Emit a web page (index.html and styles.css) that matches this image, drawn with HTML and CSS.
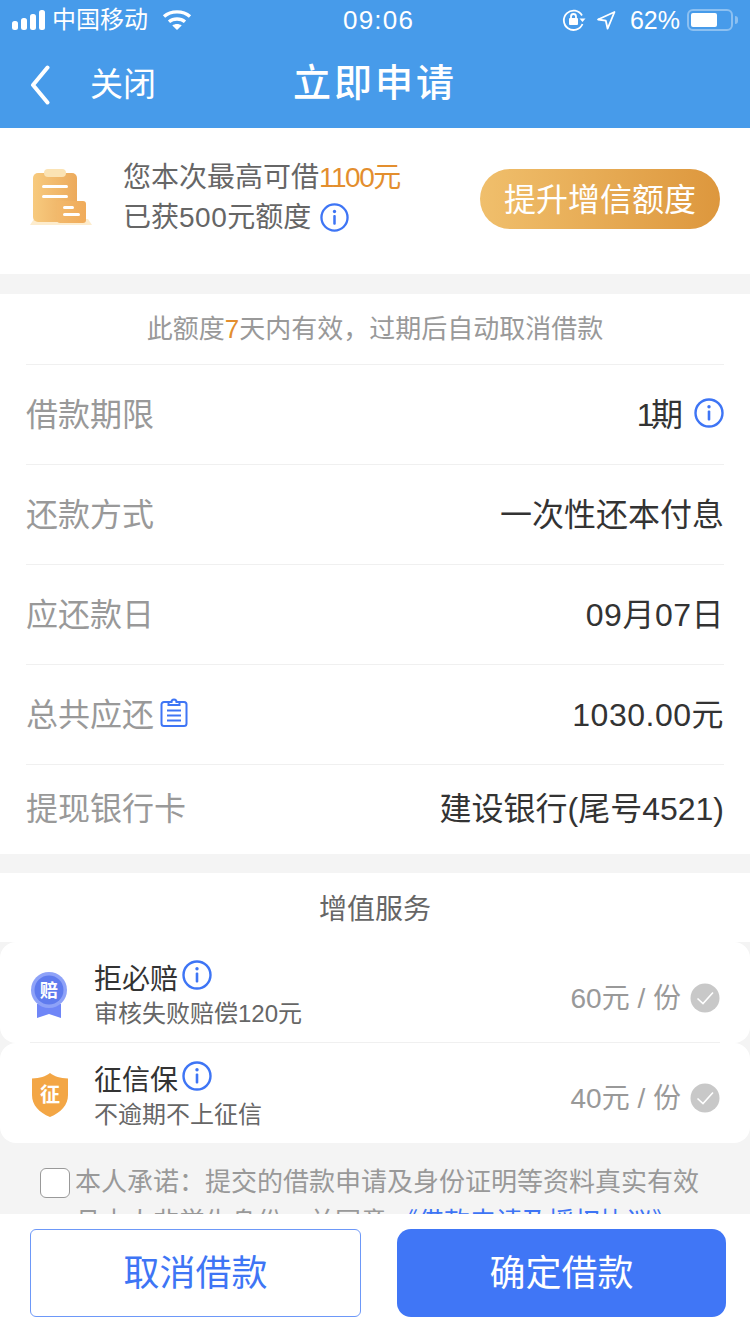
FILE: index.html

```html
<!DOCTYPE html>
<html lang="zh-CN">
<head>
    <meta charset="UTF-8">
    <meta name="viewport" content="width=device-width, initial-scale=1.0">
    <title>立即申请</title>
    <link rel="stylesheet" href="styles.css">
</head>
<body>
<div class="page">
    <header class="header">
        <div class="status-bar">
            <div class="status-left">
                <svg class="signal" width="35" height="20" viewBox="0 0 35 20"><rect x="0" y="11" width="6" height="9" rx="2.500"/><rect x="9" y="8" width="6" height="12" rx="2.500"/><rect x="18" y="4" width="6" height="16" rx="2.500"/><rect x="27" y="0" width="6" height="20" rx="2.500"/></svg>
                <span class="carrier">中国移动</span>
                <svg class="wifi" width="30" height="22" viewBox="0 0 30 22" fill="none" stroke="#fff" stroke-width="3.400"><path d="M2 7.500c7-6.200 19-6.200 26 0"/><path d="M7 12.800c4.500-3.800 11.500-3.800 16 0"/><path d="M15 21l-4.700-4.600c2.600-2 6.800-2 9.400 0z" fill="#fff" stroke="none"/></svg>
            </div>
            <span class="time">09:06</span>
            <div class="status-right">
                <svg width="24" height="24" viewBox="0 0 24 24" fill="none" stroke="#fff" stroke-width="1.800"><path d="M20 7.500A9.700 9.700 0 1 0 20.500 16"/><path d="M17.500 10.500h6l-3 3.500z" fill="#fff" stroke="none"/><rect x="7" y="10" width="9" height="7" rx="1" fill="#fff" stroke="none"/><path d="M9 10V8.500a2.500 2.500 0 0 1 5 0V10"/></svg>
                <svg class="arrow" width="20" height="20" viewBox="0 0 20 20" fill="none" stroke="#fff" stroke-width="1.800" stroke-linejoin="round"><path d="M18.500 2 2 9.500l7.800 1.200 1.800 8z"/></svg>
                <span class="percent">62%</span>
                <div class="battery"><div class="battery-fill"></div></div>
                <div class="battery-tip"></div>
            </div>
        </div>
        <div class="nav-bar">
            <div class="nav-left">
                <svg width="20" height="40" viewBox="0 0 20 40" fill="none" stroke="#fff" stroke-width="4" stroke-linecap="round" stroke-linejoin="round"><path d="M17.500 2.500 3 20l14.500 17.500"/></svg>
                <span class="nav-close">关闭</span>
            </div>
            <h1 class="nav-title">立即申请</h1>
        </div>
    </header>

    <main class="content">
        <section class="banner">
            <svg class="banner-icon" width="62" height="58" viewBox="0 0 62 58">
                <defs>
                    <linearGradient id="clip" x1="0" x2="1"><stop offset="0" stop-color="#f7ca7e"/><stop offset="1" stop-color="#ecaa5c"/></linearGradient>
                    <linearGradient id="card" x1="0" x2="1"><stop offset="0" stop-color="#f2b96c"/><stop offset="1" stop-color="#f0ab5a"/></linearGradient>
                </defs>
                <path d="M4 50h54l4 6H0z" fill="#fdeccd"/>
                <rect x="3" y="4" width="44" height="49" rx="5" fill="url(#clip)"/>
                <rect x="14" y="0" width="22" height="8" rx="4" fill="#fbe3b4"/>
                <rect x="12" y="16" width="26" height="3" rx="1.500" fill="#fff"/>
                <rect x="12" y="26" width="26" height="3" rx="1.500" fill="#fff"/>
                <rect x="27" y="32" width="29" height="22" rx="3" fill="url(#card)"/>
                <rect x="33" y="37" width="11" height="3" rx="1.500" fill="#fff"/>
                <rect x="33" y="44" width="17" height="3" rx="1.500" fill="#fff"/>
            </svg>
            <div class="banner-text">
                <p>您本次最高可借<span class="orange"><span class="narrow">1100</span>元</span></p>
                <p class="banner-line"><span>已获<span class="wide">500</span>元额度</span>
                    <svg class="info" width="29" height="29" viewBox="0 0 30 30"><use href="#info-icon"/></svg>
                </p>
            </div>
            <div class="raise-btn">提升增信额度</div>
        </section>

        <section class="loan">
            <div class="notice">此额度<span class="orange">7</span>天内有效，过期后自动取消借款</div>
            <div class="row">
                <span class="row-label">借款期限</span>
                <span class="row-value"><span><span class="one">1</span>期</span>
                    <svg class="info" width="30" height="30" viewBox="0 0 30 30"><use href="#info-icon"/></svg>
                </span>
            </div>
            <div class="row">
                <span class="row-label">还款方式</span>
                <span class="row-value">一次性还本付息</span>
            </div>
            <div class="row">
                <span class="row-label">应还款日</span>
                <span class="row-value wide">09月07日</span>
            </div>
            <div class="row">
                <span class="row-label">总共应还
                    <svg width="28" height="30" viewBox="0 0 28 30" fill="none" stroke="#3e75f5" stroke-width="2"><path d="M8.500 5H4a2.500 2.500 0 0 0-2.500 2.500v19A2.500 2.500 0 0 0 4 29h20a2.500 2.500 0 0 0 2.500-2.500v-19A2.500 2.500 0 0 0 24 5h-4.500"/><path d="M8.500 8V5h3a2.500 2.500 0 0 1 5 0h3v3z"/><path d="M7 13.500h14M7 18.500h14M7 23.500h14"/></svg>
                </span>
                <span class="row-value wide">1030.00元</span>
            </div>
            <div class="row row-last">
                <span class="row-label">提现银行卡</span>
                <span class="row-value">建设银行(尾号4521)</span>
            </div>
        </section>

        <section class="services">
            <div class="services-title">增值服务</div>
            <div class="service-card">
                <svg class="service-icon icon-medal" width="38" height="46" viewBox="0 0 38 46">
                    <path d="M7 32h24v14l-12-4-12 4z" fill="#6f86f7"/>
                    <circle cx="19" cy="18" r="18" fill="#8ea2f8"/>
                    <circle cx="19" cy="18" r="14.500" fill="#5f7bee"/>
                    <text x="19" y="24.500" class="badge-text badge-small" text-anchor="middle">赔</text>
                </svg>
                <div class="service-info">
                    <div class="service-name">拒必赔
                        <svg class="info service-tip" width="30" height="30" viewBox="0 0 30 30"><use href="#info-icon"/></svg>
                    </div>
                    <div class="service-desc">审核失败赔偿120元</div>
                </div>
                <div class="service-price">60元 / 份</div>
                <svg class="check" width="30" height="30" viewBox="0 0 30 30"><circle cx="15" cy="15" r="14.500" fill="#c8c8c8"/><path d="M7.500 15.500l5.500 5L23 9.500" fill="none" stroke="#fff" stroke-width="1.600"/></svg>
            </div>
            <div class="service-card service-card-next">
                <svg class="service-icon icon-shield" width="38" height="44" viewBox="0 0 38 44">
                    <path d="M20 0c4.500 3.500 10 5 18 5.500V22C38 32 31 39.500 20 44 9 39.500 2 32 2 22V5.500C10 5 15.500 3.500 20 0z" fill="#f3a645"/>
                    <text x="20" y="29" class="badge-text" text-anchor="middle">征</text>
                </svg>
                <div class="service-info">
                    <div class="service-name">征信保
                        <svg class="info service-tip" width="30" height="30" viewBox="0 0 30 30"><use href="#info-icon"/></svg>
                    </div>
                    <div class="service-desc">不逾期不上征信</div>
                </div>
                <div class="service-price">40元 / 份</div>
                <svg class="check" width="30" height="30" viewBox="0 0 30 30"><circle cx="15" cy="15" r="14.500" fill="#c8c8c8"/><path d="M7.500 15.500l5.500 5L23 9.500" fill="none" stroke="#fff" stroke-width="1.600"/></svg>
            </div>
        </section>

        <section class="agreement">
            <div class="checkbox"></div>
            <p>本人承诺：提交的借款申请及身份证明等资料真实有效且本人非学生身份，并同意<span class="link">《借款申请及授权协议》</span></p>
        </section>
    </main>

    <footer class="footer">
        <div class="btn btn-cancel">取消借款</div>
        <div class="btn btn-ok">确定借款</div>
    </footer>
</div>

<svg class="defs" width="0" height="0">
    <symbol id="info-icon" viewBox="0 0 30 30">
        <circle cx="15" cy="15" r="13.500" fill="none" stroke="#3e75f5" stroke-width="2.400"/>
        <rect x="13.700" y="12.500" width="2.600" height="10" rx="1" fill="#3e75f5"/>
        <circle cx="15" cy="8.800" r="1.700" fill="#3e75f5"/>
    </symbol>
</svg>
</body>
</html>
```

FILE: styles.css

```css
* {
    box-sizing: border-box;
}
body {
    margin: 0;
    font-family: "Liberation Sans", "Noto Sans CJK SC", sans-serif;
    background: #f4f4f4;
}
p, h1 {
    margin: 0;
    font-weight: normal;
}
.page {
    width: 750px;
    height: 1334px;
    display: flex;
    flex-direction: column;
    overflow: hidden;
}
.defs {
    position: absolute;
}

/* header */
.header {
    background: #479bea;
    color: #fff;
    height: 128px;
    flex-shrink: 0;
}
.status-bar {
    height: 40px;
    padding: 0 12px;
    display: flex;
    align-items: center;
    justify-content: space-between;
    position: relative;
}
.status-left, .status-right {
    display: flex;
    align-items: center;
}
.carrier {
    font-size: 24px;
    line-height: 40px;
    margin-left: 5px;
}
.signal {
    fill: #fff;
}
.wifi {
    margin-left: 14px;
}
.time {
    position: absolute;
    left: 343px;
    font-size: 26px;
    letter-spacing: 1.200px;
    line-height: 40px;
}
.arrow {
    margin-left: 10px;
}
.percent {
    font-size: 25px;
    margin-left: 14px;
}
.battery {
    width: 46px;
    height: 22px;
    margin-left: 7px;
    padding: 2px;
    border: 2px solid #8cc0f1;
    border-radius: 6px;
}
.battery-fill {
    width: 26px;
    height: 100%;
    background: #fff;
    border-radius: 2px;
}
.battery-tip {
    width: 3px;
    height: 8px;
    margin-left: 2px;
    background: #8cc0f1;
    border-radius: 0 3px 3px 0;
}
.nav-bar {
    height: 88px;
    padding: 2px 0 0 30px;
    display: flex;
    align-items: center;
    position: relative;
}
.nav-left {
    display: flex;
    align-items: center;
}
.nav-close {
    font-size: 33px;
    line-height: 44px;
    margin-left: 40px;
}
.nav-title {
    position: absolute;
    left: 0;
    right: 0;
    text-align: center;
    font-size: 38px;
    font-weight: 500;
    letter-spacing: 3px;
    line-height: 50px;
    top: 18px;
}

/* main */
.content {
    flex: 1;
    overflow: hidden;
}
.orange {
    color: #e38e2e;
}
.narrow {
    letter-spacing: -1.500px;
}
.wide {
    letter-spacing: 0.500px;
}
.one {
    letter-spacing: -3.500px;
}
.banner {
    height: 146px;
    background: #fff;
    display: flex;
    align-items: center;
    padding: 0 30px;
}
.banner-icon {
    flex-shrink: 0;
    margin-bottom: 6px;
}
.banner-text {
    margin-left: 31px;
    font-size: 28px;
    line-height: 40px;
    color: #666;
    flex: 1;
    margin-bottom: 7px;
}
.banner-line {
    display: flex;
    align-items: center;
    gap: 9px;
}
.raise-btn {
    width: 240px;
    height: 60px;
    margin-bottom: 4px;
    line-height: 62px;
    text-align: center;
    font-size: 32px;
    color: #fff;
    border-radius: 30px;
    background: linear-gradient(90deg, #f0bf6c, #dd973d);
}
.loan {
    margin-top: 20px;
    background: #fff;
    padding: 0 26px;
}
.notice {
    height: 70px;
    line-height: 70px;
    text-align: center;
    font-size: 26px;
    color: #999;
}
.row {
    height: 100px;
    padding-bottom: 6px;
    border-top: 1px solid #f0f0f0;
    display: flex;
    align-items: center;
    justify-content: space-between;
    font-size: 32px;
}
.row-last {
    height: 90px;
    padding-bottom: 8px;
}
.row-label {
    color: #999;
    display: flex;
    align-items: center;
    gap: 6px;
}
.row-value {
    color: #333;
    display: flex;
    align-items: center;
    gap: 11px;
}
.row-value .info {
    margin-top: 3px;
}
.services {
    margin-top: 19px;
}
.services-title {
    height: 69px;
    line-height: 74px;
    background: #fff;
    text-align: center;
    font-size: 28px;
    color: #666;
}
.service-card {
    height: 101px;
    background: #fff;
    border-radius: 16px;
    display: flex;
    align-items: center;
    padding: 0 30px;
    position: relative;
}
.service-card-next {
    height: 100px;
}
.service-card-next::before {
    content: "";
    position: absolute;
    top: -1px;
    left: 30px;
    right: 30px;
    height: 1px;
    background: #f0f0f0;
}
.service-icon {
    flex-shrink: 0;
}
.icon-medal {
    margin-top: 4px;
}
.icon-shield {
    margin-top: 3px;
}
.badge-text {
    font-size: 20px;
    font-weight: bold;
    fill: #fff;
}
.badge-small {
    font-size: 18px;
}
.service-info {
    margin-left: 26px;
    flex: 1;
    padding-top: 3px;
}
.service-name {
    font-size: 28px;
    line-height: 38px;
    color: #333;
    display: flex;
    align-items: center;
    gap: 4px;
    padding-top: 2px;
}
.service-tip {
    margin-top: -10px;
}
.service-desc {
    font-size: 24px;
    line-height: 30px;
    color: #666;
}
.service-price {
    font-size: 28px;
    color: #999;
    margin-top: 6px;
    margin-right: -1px;
}
.check {
    margin-left: 10px;
    margin-top: 10px;
    flex-shrink: 0;
}
.agreement {
    position: relative;
    padding: 19px 40px 0 75px;
}
.agreement p {
    font-size: 26px;
    line-height: 40px;
    color: #999;
}
.checkbox {
    position: absolute;
    left: 40px;
    top: 25px;
    width: 30px;
    height: 30px;
    background: #fff;
    border: 1px solid #999;
    border-radius: 6px;
}
.link {
    color: #3e75f5;
    margin-left: 5px;
}

/* footer */
.footer {
    flex-shrink: 0;
    height: 120px;
    background: #fff;
    padding: 15px 24px 17px 30px;
    display: flex;
    gap: 36px;
    position: relative;
}
.btn {
    flex: 1;
    font-size: 36px;
    line-height: 88px;
    text-align: center;
}
.btn-cancel {
    color: #3e75f5;
    border: 1px solid #6d98f8;
    border-radius: 6px;
}
.btn-ok {
    color: #fff;
    background: #4076f6;
    border-radius: 14px;
    line-height: 90px;
}
```
